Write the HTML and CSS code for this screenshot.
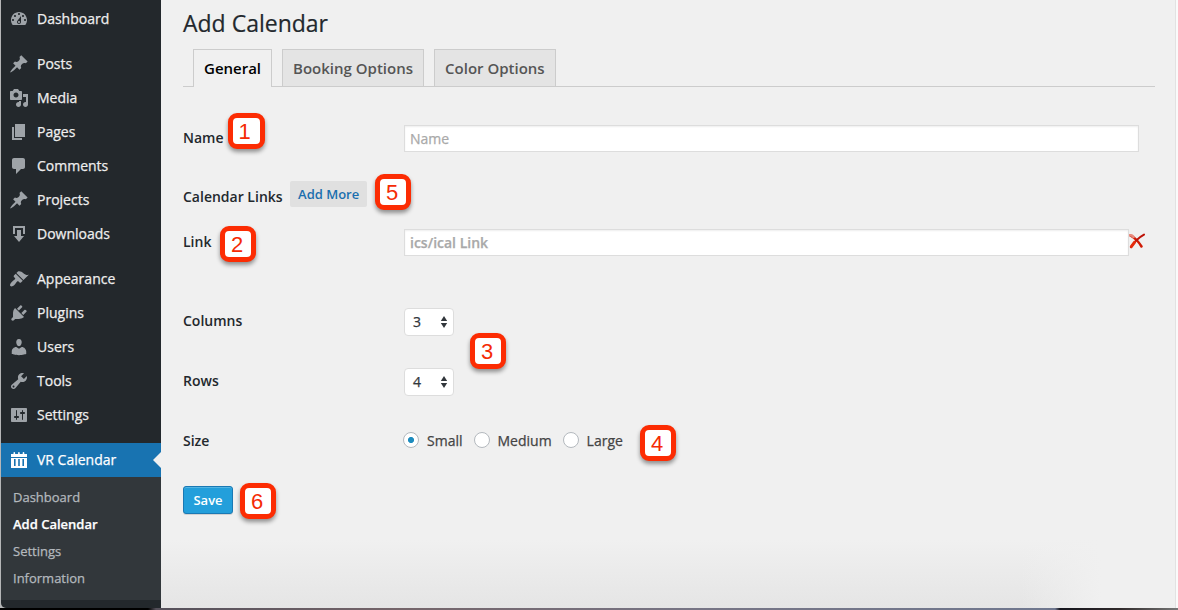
FILE: index.html
```
<!DOCTYPE html>
<html lang="en">
<head>
<meta charset="utf-8">
<title>Add Calendar</title>
<link rel="stylesheet" href="styles.css">
</head>
<body>
<div class="window">
  <nav class="sidebar">
    <ul class="menu">
      <li class="item"><svg class="icon" viewBox="0 0 20 20"><path d="M3.76 16h12.48c1.1-1.37 1.76-3.11 1.76-5 0-4.42-3.58-8-8-8s-8 3.58-8 8c0 1.89.66 3.63 1.76 5zM10 4c.55 0 1 .45 1 1s-.45 1-1 1-1-.45-1-1 .45-1 1-1zM6 6c.55 0 1 .45 1 1s-.45 1-1 1-1-.45-1-1 .45-1 1-1zm8 0c.55 0 1 .45 1 1s-.45 1-1 1-1-.45-1-1 .45-1 1-1zm-5.37 5.55L12 7v6c0 1.1-.9 2-2 2s-2-.9-2-2c0-.57.24-1.08.63-1.45zM4 10c.55 0 1 .45 1 1s-.45 1-1 1-1-.45-1-1 .45-1 1-1zm12 0c.55 0 1 .45 1 1s-.45 1-1 1-1-.45-1-1 .45-1 1-1zm-5 3c0-.55-.45-1-1-1s-1 .45-1 1 .45 1 1 1 1-.45 1-1z"/></svg><span>Dashboard</span></li>
      <li class="item group"><svg class="icon" viewBox="0 0 20 20"><path d="M10.44 3.02l1.82-1.82 6.36 6.35-1.83 1.82c-1.05-.68-2.48-.57-3.41.36l-.75.75c-.92.93-1.04 2.35-.35 3.41l-1.83 1.82-2.41-2.41-2.8 2.79c-.42.42-3.38 2.71-3.8 2.29s1.86-3.39 2.28-3.81l2.79-2.79L4.1 9.36l1.83-1.82c1.05.69 2.48.57 3.4-.36l.75-.75c.93-.92 1.05-2.35.36-3.41z"/></svg><span>Posts</span></li>
      <li class="item"><svg class="icon" viewBox="0 0 20 20"><path d="M13 11V4c0-.55-.45-1-1-1h-1.67L9 1H5L3.67 3H2c-.55 0-1 .45-1 1v7c0 .55.45 1 1 1h10c.55 0 1-.45 1-1zM7 4.5c1.38 0 2.5 1.12 2.5 2.5S8.38 9.5 7 9.5 4.5 8.38 4.5 7 5.62 4.5 7 4.5zM14 6h5v10.5c0 1.38-1.12 2.5-2.5 2.5S14 17.88 14 16.5s1.12-2.5 2.5-2.5c.17 0 .34.02.5.05V9h-3V6zm-4 8.05V13h2v3.5c0 1.38-1.12 2.5-2.5 2.5S7 17.88 7 16.5 8.12 14 9.5 14c.17 0 .34.02.5.05z"/></svg><span>Media</span></li>
      <li class="item"><svg class="icon" viewBox="0 0 20 20"><path d="M6 15V2h10v13H6zm-1 1h8v2H3V5h2v11z"/></svg><span>Pages</span></li>
      <li class="item"><svg class="icon" viewBox="0 0 20 20"><path d="M5 2h9c1.1 0 2 .9 2 2v7c0 1.1-.9 2-2 2h-2l-5 5v-5H5c-1.1 0-2-.9-2-2V4c0-1.1.9-2 2-2z"/></svg><span>Comments</span></li>
      <li class="item"><svg class="icon" viewBox="0 0 20 20"><path d="M10.44 3.02l1.82-1.82 6.36 6.35-1.83 1.82c-1.05-.68-2.48-.57-3.41.36l-.75.75c-.92.93-1.04 2.35-.35 3.41l-1.83 1.82-2.41-2.41-2.8 2.79c-.42.42-3.38 2.71-3.8 2.29s1.86-3.39 2.28-3.81l2.79-2.79L4.1 9.36l1.83-1.82c1.05.69 2.48.57 3.4-.36l.75-.75c.93-.92 1.05-2.35.36-3.41z"/></svg><span>Projects</span></li>
      <li class="item"><svg class="icon" viewBox="0 0 20 20"><path d="M14.01 4v6h2V2H4v8h2.01V4h8zm-2 2v6h3l-5 6-5-6h3V6h4z"/></svg><span>Downloads</span></li>
      <li class="item group"><svg class="icon" viewBox="0 0 20 20"><path d="M14.48 11.06L7.41 3.99l1.5-1.5c.5-.56 2.3-.47 3.51.32 1.21.8 1.43 1.28 2.91 2.1 1.18.64 2.45 1.26 4.45.85zm-.71.71L6.7 4.7 4.93 6.47c-.39.39-.39 1.02 0 1.41l1.06 1.06c.39.39.39 1.03 0 1.42-.6.6-1.43 1.11-2.21 1.69-.35.26-.7.53-1.01.84C1.43 14.23.4 16.08 1.4 17.07c.99 1 2.84-.03 4.18-1.36.31-.31.58-.66.85-1.02.57-.78 1.08-1.61 1.69-2.21.39-.39 1.02-.39 1.41 0l1.06 1.06c.39.39 1.02.39 1.41 0z"/></svg><span>Appearance</span></li>
      <li class="item"><svg class="icon" viewBox="0 0 20 20"><path d="M13.11 4.36L9.87 7.6 8 5.73l3.24-3.24c.35-.34 1.05-.2 1.56.32.52.51.66 1.21.31 1.55zm-8 1.77l.91-1.12 9.01 9.01-1.19.84c-.71.71-2.63 1.16-3.82 1.16H6.14L4.9 17.26c-.59.59-1.54.59-2.12 0-.59-.58-.59-1.53 0-2.12l1.24-1.24v-3.88c0-1.13.4-3.19 1.09-3.89zm7.26 3.97l3.24-3.24c.34-.35 1.04-.21 1.55.31.52.51.66 1.21.31 1.55l-3.24 3.25z"/></svg><span>Plugins</span></li>
      <li class="item"><svg class="icon" viewBox="0 0 20 20"><path d="M10 9.25c-2.27 0-2.73-3.44-2.73-3.44C7 4.02 7.82 2 9.97 2c2.16 0 2.98 2.02 2.71 3.81 0 0-.41 3.44-2.68 3.44zm0 2.57L12.72 10c2.39 0 4.52 2.33 4.52 4.53v2.49s-3.65 1.13-7.24 1.13c-3.65 0-7.24-1.13-7.24-1.13v-2.49c0-2.25 1.94-4.48 4.47-4.48z"/></svg><span>Users</span></li>
      <li class="item"><svg class="icon" viewBox="0 0 20 20"><path d="M16.68 9.77c-1.34 1.34-3.3 1.67-4.95.99l-5.41 6.52c-.99.99-2.59.99-3.58 0s-.99-2.59 0-3.57l6.52-5.42c-.68-1.65-.35-3.61.99-4.95 1.28-1.28 3.12-1.62 4.72-1.06l-2.89 2.89 2.82 2.82 2.86-2.87c.53 1.58.18 3.39-1.08 4.65zM3.81 16.21c.4.39 1.04.39 1.43 0 .4-.4.4-1.04 0-1.43-.39-.4-1.03-.4-1.43 0-.39.39-.39 1.03 0 1.43z"/></svg><span>Tools</span></li>
      <li class="item"><svg class="icon" viewBox="0 0 20 20"><path d="M18 16V4c0-.55-.45-1-1-1H3c-.55 0-1 .45-1 1v12c0 .55.45 1 1 1h14c.55 0 1-.45 1-1zM8 11h1c.55 0 1 .45 1 1s-.45 1-1 1H8v1.5c0 .28-.22.5-.5.5s-.5-.22-.5-.5V13H6c-.55 0-1-.45-1-1s.45-1 1-1h1V5.5c0-.28.22-.5.5-.5s.5.22.5.5V11zm5-2h-1c-.55 0-1-.45-1-1s.45-1 1-1h1V5.5c0-.28.22-.5.5-.5s.5.22.5.5V7h1c.55 0 1 .45 1 1s-.45 1-1 1h-1v5.5c0 .28-.22.5-.5.5s-.5-.22-.5-.5V9z"/></svg><span>Settings</span></li>
      <li class="item group current"><svg class="icon" viewBox="0 0 20 20"><path fill-rule="evenodd" d="M2 4h2.500V2.800a.8.8 0 0 1 1.600 0V4h3V2.800a.8.8 0 0 1 1.600 0V4h3V2.800a.8.8 0 0 1 1.600 0V4H18v3H2zM2 8h16v10H2zM5 9v7h1.600V9zM9.200 9v7h1.600V9zM13.400 9v7H15V9z"/></svg><span>VR Calendar</span></li>
    </ul>
    <ul class="submenu">
      <li>Dashboard</li>
      <li class="selected">Add Calendar</li>
      <li>Settings</li>
      <li>Information</li>
    </ul>
  </nav>
  <main class="content">
    <h1 class="title">Add Calendar</h1>
    <div class="tabs">
      <a class="tab active">General</a><a class="tab">Booking Options</a><a class="tab">Color Options</a>
    </div>
    <form class="form">
      <div class="row name-row"><span class="label">Name</span><input class="text" placeholder="Name"></div>
      <div class="row links-row"><span>Calendar Links</span><button type="button" class="add">Add More</button></div>
      <div class="row link-row"><span class="label">Link</span><input class="text link" placeholder="ics/ical Link"><svg class="remove" viewBox="0 0 16 16"><path d="M1.500 2.500Q8 6 12.500 13.500" fill="none" stroke="#cf1b05" stroke-width="2.500" stroke-linecap="round"/><path d="M.8 2.300Q3 1.800 4.500 4" fill="none" stroke="#e88a7d" stroke-width="2.600" stroke-linecap="round"/><path d="M2 14.200Q7 6 15 1.600" fill="none" stroke="#bd1207" stroke-width="2" stroke-linecap="round"/><path d="M2.300 13.600L5.500 9.300" stroke="#e52b0c" stroke-width="3" stroke-linecap="round"/></svg></div>
      <div class="row columns-row"><span class="label">Columns</span><span class="select"><span>3</span><svg width="8" height="14" viewBox="0 0 8 14"><path d="M4 1l3.200 5H.8zM4 13L.8 8h6.400z"/></svg></span></div>
      <div class="row rows-row"><span class="label">Rows</span><span class="select"><span>4</span><svg width="8" height="14" viewBox="0 0 8 14"><path d="M4 1l3.200 5H.8zM4 13L.8 8h6.400z"/></svg></span></div>
      <div class="row size-row"><span class="label">Size</span><div class="radios"><span class="radio on"></span><span class="opt">Small</span><span class="radio"></span><span class="opt">Medium</span><span class="radio"></span><span class="opt">Large</span></div></div>
      <button type="button" class="save">Save</button>
    </form>
  </main>
  <div class="edge"></div>
</div>
<div class="dock"></div>
<span class="callout c1">1</span>
<span class="callout c2">2</span>
<span class="callout c3">3</span>
<span class="callout c4">4</span>
<span class="callout c5">5</span>
<span class="callout c6">6</span>
</body>
</html>
```
FILE: styles.css
```
* { box-sizing: border-box; }
body {
  margin: 0;
  width: 1178px;
  height: 610px;
  overflow: hidden;
  background: #b5b6b7;
  font-family: "Open Sans", sans-serif;
  font-size: 14px;
  color: #23282d;
}
.window { display: flex; height: 608px; padding-left: 1px; }
.sidebar {
  width: 160px;
  flex: none;
  padding-top: 2px;
  background: #23282c;
  border-bottom-left-radius: 5px;
  -webkit-text-stroke: .25px;
}
ul { list-style: none; margin: 0; padding: 0; }
.item {
  display: flex;
  align-items: center;
  gap: 8px;
  height: 34px;
  padding-left: 8px;
  color: #eee;
  position: relative;
}
.item span { padding-bottom: 2px; }
.group { margin-top: 11px; }
.icon { width: 20px; height: 20px; fill: #9ea3a8; -webkit-text-stroke: 0; }
.current { background: #1873b1; color: #fff; }
.current .icon { fill: #fff; }
.current::after {
  content: "";
  position: absolute;
  right: 0;
  top: 9px;
  border: 8px solid transparent;
  border-left: 0;
  border-right-color: #f0f0f0;
}
.submenu {
  height: 123px;
  padding: 7px 0 0 12px;
  background: #32373b;
  font-size: 13px;
  color: #b4b9be;
}
.submenu li { height: 27px; line-height: 27px; }
.submenu .selected { color: #fff; font-weight: 600; }
.content {
  flex: 1;
  padding: 6px 20px 0 22px;
  background:
    linear-gradient(90deg, rgba(240,240,240,0) 860px, #f0f0f0 940px),
    linear-gradient(#f0f0f0 540px, #e5e5e5 608px);
}
.title { margin: 0; height: 43px; font-size: 23px; font-weight: 400; line-height: 35px; -webkit-text-stroke: .2px; }
.tabs { display: flex; gap: 10px; height: 38px; padding-left: 10px; border-bottom: 1px solid #ccc; }
.tab {
  height: 37px;
  padding: 0 10px;
  border: 1px solid #ccc;
  border-bottom: 0;
  background: #e4e4e4;
  color: #555;
  font-size: 15px;
  font-weight: 600;
  line-height: 36px;
}
.tab.active { height: 38px; background: #f0f0f0; color: #000; }
.form { display: flex; flex-direction: column; padding-top: 38px; font-weight: 600; }
.row { display: flex; align-items: center; }
.label { width: 221px; flex: none; padding-bottom: 2px; }
.text {
  width: 735px;
  height: 27px;
  padding: 0 5px;
  border: 1px solid #ddd;
  background: #fff;
  box-shadow: inset 0 1px 2px rgba(0,0,0,.07);
  font: 400 14px "Open Sans", sans-serif;
  -webkit-text-stroke: .25px;
}
.text::placeholder { color: #a9a9a9; }
.text.link { width: 725px; font-weight: 600; }
.name-row { height: 27px; }
.links-row { height: 26px; margin-top: 29px; gap: 7px; }
.links-row span { padding-top: 5px; }
.add {
  width: 77px;
  height: 26px;
  padding: 0 0 0 1px;
  border: 0;
  border-radius: 2px;
  background: #e0e0e0;
  color: #1b6fae;
  font: 600 13px "Open Sans", sans-serif;
}
.link-row { height: 27px; margin-top: 22px; }
.remove { width: 16px; height: 16px; margin-top: -4px; }
.columns-row { height: 28px; margin-top: 52px; }
.rows-row { height: 28px; margin-top: 32px; }
.columns-row .label, .rows-row .label { padding-bottom: 3px; }
.select {
  display: flex;
  align-items: center;
  justify-content: space-between;
  width: 50px;
  height: 28px;
  padding: 0 5px 0 8px;
  border: 1px solid #ddd;
  border-radius: 4px;
  background: #fff;
  font-weight: 400;
  color: #32373c;
  -webkit-text-stroke: .25px;
}
.select span { padding-bottom: 2px; }
.select svg { fill: #32373c; -webkit-text-stroke: 0; }
.size-row { height: 20px; margin-top: 34px; }
.size-row .label { padding-bottom: 0; }
.radios { display: flex; align-items: center; margin-left: -1px; font-weight: 400; color: #444; -webkit-text-stroke: .25px; }
.radio {
  width: 16px;
  height: 16px;
  margin-right: 8px;
  border: 1px solid #b4b9be;
  border-radius: 50%;
  background: #fff;
}
.radio.on { background: radial-gradient(circle, #1e8cbe 2.700px, #fff 3.400px); }
.opt { margin-right: 11px; }
.save {
  width: 50px;
  height: 28px;
  margin-top: 36px;
  padding: 0;
  border: 1px solid #1a79b4;
  border-radius: 3px;
  background: #239fdb;
  box-shadow: inset 0 1px 0 #52b4e3, 0 1px 0 rgba(0,0,0,.12);
  color: #fff;
  font: 600 13px "Open Sans", sans-serif;
}
.edge { width: 3px; background: #fafafa; border-left: 1px solid #e2e2e2; }
.dock {
  height: 2px;
  background: linear-gradient(90deg, #000 148px, #55505a 156px, #75656a 400px, #777585 700px, #70788f 1055px, #15151d 1060px, #302a2b 1120px, #777 1178px);
}
/* Numbered markers placed over the form */
.callout {
  position: absolute;
  width: 36px;
  height: 36px;
  padding-right: 2px;
  border: 5px solid #fc2c03;
  border-radius: 9px;
  background: #fff;
  box-shadow: 0 3px 4px rgba(0,0,0,.4);
  color: #f52b05;
  font: 22px/27px "Liberation Sans", Arial, sans-serif;
  text-align: center;
}
.c1 { left: 228px; top: 113px; width: 37px; padding-right: 4px; }
.c2 { left: 220px; top: 226px; }
.c3 { left: 470px; top: 333px; }
.c4 { left: 640px; top: 425px; }
.c5 { left: 375px; top: 174px; }
.c6 { left: 240px; top: 483px; }
```
